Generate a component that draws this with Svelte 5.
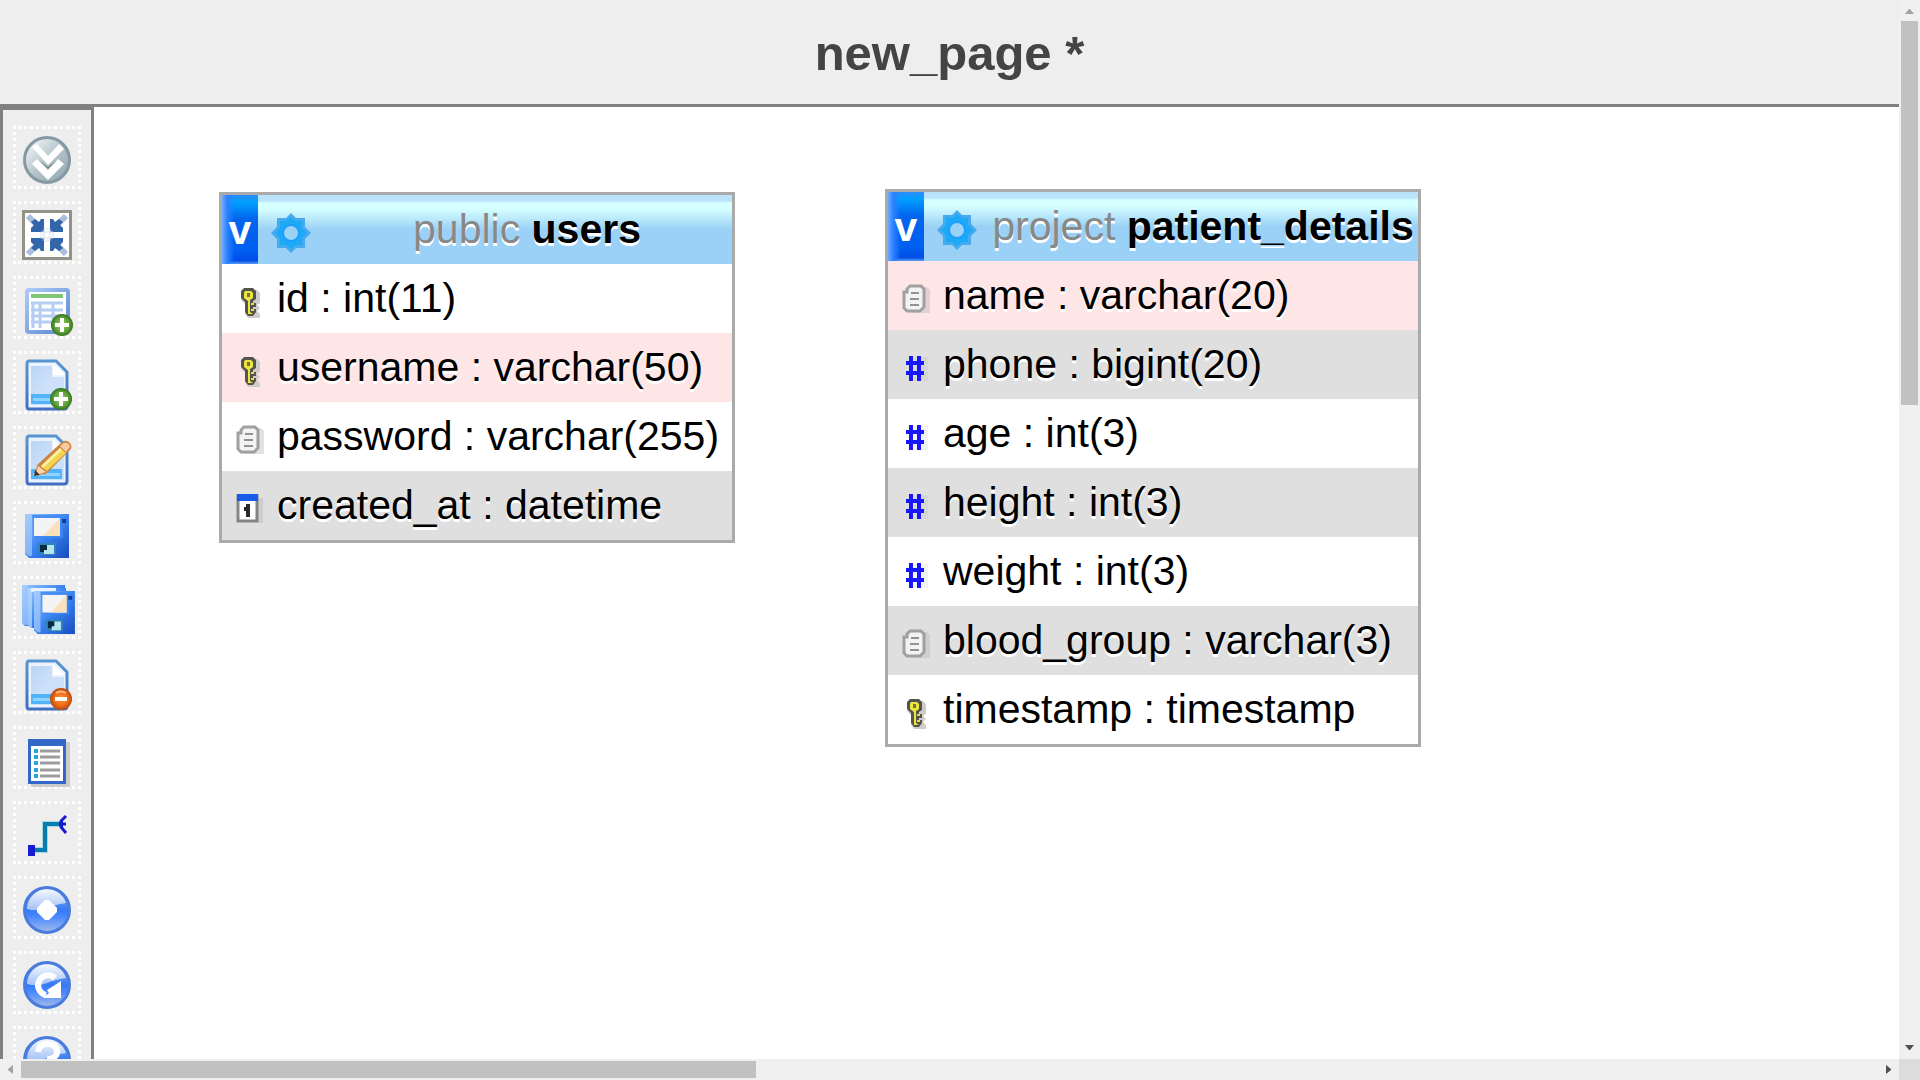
<script>
  const tools = [
    ['toggle', 'Show/Hide tables list'],
    ['fullscreen', 'View in fullscreen'],
    ['tableadd', 'Add tables from other databases'],
    ['pageadd', 'New page'],
    ['pageedit', 'Open page'],
    ['save', 'Save page'],
    ['saveas', 'Save page as'],
    ['pagedelete', 'Delete pages'],
    ['createtable', 'Create table'],
    ['relation', 'Create relationship'],
    ['display', 'Choose column to display'],
    ['reload', 'Reload'],
    ['help', 'Help']
  ];

  const tables = [
    {
      id: 'users', schema: 'public', name: 'users', x: 125, y: 85, width: 516,
      columns: [
        ['key', 'id : int(11)', ''],
        ['key', 'username : varchar(50)', 'pink'],
        ['text', 'password : varchar(255)', ''],
        ['date', 'created_at : datetime', 'grey']
      ]
    },
    {
      id: 'patients', schema: 'project', name: 'patient_details', x: 791, y: 82, width: 536,
      columns: [
        ['text', 'name : varchar(20)', 'pink'],
        ['number', 'phone : bigint(20)', 'grey'],
        ['number', 'age : int(3)', ''],
        ['number', 'height : int(3)', 'grey'],
        ['number', 'weight : int(3)', ''],
        ['text', 'blood_group : varchar(3)', 'grey'],
        ['key', 'timestamp : timestamp', '']
      ]
    }
  ];
</script>

{#snippet floppy()}
  <path d="M0 0H44V44H4L0 40Z" fill="url(#disk)" />
  <path d="M0 0H7V42H4L0 39Z" fill="#a9d0ff" opacity=".65" />
  <path d="M7 1H38V24H9Z" fill="#3d8af2" opacity=".8" />
  <path d="M9 4H35V22H9Z" fill="#f5f4f5" />
  <path d="M35 4V22H18Z" fill="#fbe0bc" />
  <path d="M12 29H31V41H14Z" fill="#2e83b8" />
  <path d="M15 31H22V38H15Z" fill="#082944" />
  <path d="M22 31H29V40H19V36H22Z" fill="#b5e4ec" />
  <rect x="37" y="5" width="4" height="4" fill="#123d96" />
{/snippet}

{#snippet page()}
  <path d="M10 4H37L48 15V49Q48 52 45 52H10Q8 52 8 49V7Q8 4 10 4Z" fill="#eaf3ff" stroke="url(#edge)" stroke-width="3" />
  <path d="M12 9H33V20H45V48H12Z" fill="url(#paper)" />
  <path d="M34 7V18H46Z" fill="#fff" />
  <path d="M12 37H43V47H12Z" fill="#51b4fa" />
  <path d="M14 41H41V44H14Z" fill="#8ed2ff" />
{/snippet}

{#snippet ball()}
  <circle cx="28" cy="28" r="22.5" fill="url(#ball)" stroke="#497bdc" stroke-width="3" />
  <path d="M8 27A20 20 0 0 1 47 21Q35 23 28 26Q19 30 8 27Z" fill="url(#gloss)" />
{/snippet}

{#snippet toolIcon(kind)}
  {#if kind === 'toggle'}
    <circle cx="28" cy="28" r="22.5" fill="url(#grey)" stroke="#8499a4" stroke-width="3" />
    <path d="M13 15L18 12L29 24L40 12L45 17L29 33Z" fill="#fff" />
    <path d="M13 32L18 27L29 38L39 27L45 32L29 48Z" fill="#fff" />
    <path d="M20 28L29 37L38 28L29 35Z" fill="#75868e" />
  {:else if kind === 'fullscreen'}
    <rect x="4.500" y="4.500" width="47" height="47" fill="#fff" stroke="#929289" stroke-width="3" />
    <path d="M9 9L19 19M47 9L37 19M9 47L19 37M47 47L37 37" stroke="#a9bfdc" stroke-width="6" />
    <path d="M25 12V25H12V21L15 18L12 15L16 12L20 15L22 12ZM31 12V25H44V21L41 18L44 15L40 12L36 15L34 12ZM25 44V31H12V35L15 38L12 41L16 44L20 41L22 44ZM31 44V31H44V35L41 38L44 41L40 44L36 41L34 44Z" fill="#3266aa" />
    <path d="M25 22H31V34H25ZM22 25H34V31H22Z" fill="none" stroke="#d5e0ef" stroke-width="1" />
  {:else if kind === 'tableadd'}
    <rect x="8" y="8" width="41" height="42" rx="2" fill="#fff" stroke="url(#edge2)" stroke-width="4" />
    <path d="M12 14H44" stroke="#83c576" stroke-width="4" />
    <path d="M12 21H44M12 28H44M12 34H44M12 40H44M14 20V46M21 20V46M34 20V46" stroke="#b4cdf0" stroke-width="3" />
    <circle cx="43" cy="43" r="11" fill="url(#green)" />
    <path d="M43 36V50M36 43H50" stroke="#fff" stroke-width="4" />
  {:else if kind === 'pageadd'}
    {@render page()}
    <circle cx="42" cy="42" r="11" fill="url(#green)" />
    <path d="M42 35V49M35 42H49" stroke="#fff" stroke-width="4" />
  {:else if kind === 'pageedit'}
    {@render page()}
    <path d="M16 43L18 33L43 10Q47 7 51 11Q54 15 51 18L27 42Z" fill="#c98542" />
    <path d="M22 34L41 16L47 21L28 39Z" fill="#f3d34e" />
    <path d="M23 35L42 17" stroke="#fff0a0" stroke-width="3" />
    <path d="M41 14L45 11Q50 10 51 15L47 20Z" fill="#f7cba1" />
    <path d="M19 34L27 40L17 43Z" fill="#f7d6ac" />
    <path d="M16 38L21 43L15 44Z" fill="#4b3020" />
  {:else if kind === 'save'}
    <g transform="translate(6 7)">{@render floppy()}</g>
  {:else if kind === 'saveas'}
    <g transform="translate(3 3)"><path d="M0 0H43V41H3L0 38Z" fill="url(#disk)" /><path d="M0 0H6V40H3L0 38Z" fill="#a9d0ff" opacity=".7" /></g>
    <g transform="translate(9 6)"><path d="M0 0H38V40H3L0 37Z" fill="url(#disk)" /><path d="M0 0H4V40H3L0 37Z" fill="#b9dbff" opacity=".7" /></g>
    <path d="M12 6H37V10H12Z" fill="#e7f2ff" />
    <g transform="translate(15 9) scale(.93 .98)">{@render floppy()}</g>
  {:else if kind === 'pagedelete'}
    {@render page()}
    <circle cx="42" cy="42" r="11" fill="url(#orange)" />
    <path d="M36 42H48" stroke="#fff" stroke-width="4" />
    <path d="M37 36Q42 33 47 36" fill="none" stroke="#ffbd83" stroke-width="2" />
  {:else if kind === 'createtable'}
    <rect x="12" y="10" width="39" height="45" fill="#bcbcbc" opacity=".7" />
    <rect x="9" y="7" width="38" height="45" fill="#3468c8" />
    <rect x="12" y="14" width="32" height="35" fill="#fff" />
    <path d="M21 19H41M21 25H41M21 31H41M21 38H41M21 44H41" stroke="#9c9c9c" stroke-width="3" />
    <path d="M15 19H19M15 25H19M15 31H19M15 38H19M15 44H19" stroke="#27a6dd" stroke-width="4" />
  {:else if kind === 'relation'}
    <path d="M14 43H26V17H41" fill="none" stroke="#a9d7e3" stroke-width="6" />
    <path d="M14 43H26V17H41" fill="none" stroke="#087cae" stroke-width="4" />
    <rect x="9" y="38" width="7" height="11" fill="#171bd0" />
    <path d="M41 14L44 12V22L41 20Z" fill="#171bd0" />
    <path d="M47 9L42 14V20L47 26M40 17H47" fill="none" stroke="#171bd0" stroke-width="3" />
  {:else if kind === 'display'}
    {@render ball()}
    <path d="M26 18H30L38 26V30L30 38H26L18 30V26Z" fill="#fff" />
  {:else if kind === 'reload'}
    {@render ball()}
    <path d="M36 21A10 10 0 1 0 27 38" fill="none" stroke="#fff" stroke-width="6" />
    <path d="M42 24V41H24L30 36L28 33L36 28Z" fill="#fff" />
  {:else}
    {@render ball()}
    <path d="M19 20Q20 12 28 12Q38 12 38 20Q38 25 31 27V32" fill="none" stroke="#fff" stroke-width="6" />
  {/if}
{/snippet}

{#snippet columnIcon(kind)}
  {#if kind === 'key'}
    <path d="M8 4H21L24 7V17L21 19L24 22L21 25L24 28V32H12L9 28V18L5 14V7Z" fill="#d0cccb" />
    <path d="M8 2H17L20 5V13L17 15V17H20V21H17V23H20V26L17 30H12L9 26V16L5 12V5Z" fill="#55544a" />
    <path d="M9 5H15L17 7V12L14 14V26L17 28H12V15L8 12V7Z" fill="#ece541" />
    <path d="M15 18H18M15 24H18" stroke="#e2db46" stroke-width="2" />
    <rect x="11" y="7" width="3" height="4" fill="#77723a" />
  {:else if kind === 'text'}
    <path d="M10 4H25L28 7V30H9Z" fill="#b9b5b5" opacity=".4" />
    <path d="M8 3H19L22 6V24L18 28H5L2 25V9H5V6Z" fill="#f3f3f3" stroke="#a0a0a0" stroke-width="3" />
    <path d="M9 10H17M8 16H17M8 22H17" stroke="#929292" stroke-width="2" />
  {:else if kind === 'number'}
    <path d="M12 5H26V29H12Z" fill="#aaa" opacity=".15" />
    <path d="M9 4V29M17 4V29M4 11H22M4 21H22" stroke="#1717f8" stroke-width="4" />
  {:else}
    <path d="M22 5H27V30H22Z" fill="#b4b4b4" opacity=".4" />
    <rect x="2" y="3" width="19" height="25" fill="#fff" stroke="#858585" stroke-width="3" />
    <rect x="1" y="1" width="21" height="7" fill="#175ce8" />
    <path d="M12 11V24M8 16H12" stroke="#292929" stroke-width="4" />
  {/if}
{/snippet}

<svg class="defs" aria-hidden="true">
  <defs>
    <linearGradient id="grey" x2="1" y2="1"><stop stop-color="#fff" /><stop offset=".5" stop-color="#b7c5cc" /><stop offset="1" stop-color="#8ea2ad" /></linearGradient>
    <linearGradient id="ball" x2="0" y2="1"><stop stop-color="#9ebcf3" /><stop offset=".5" stop-color="#347af4" /><stop offset=".65" stop-color="#4a88ff" /><stop offset="1" stop-color="#a5bce9" /></linearGradient>
    <linearGradient id="gloss" x2="0" y2="1"><stop stop-color="#f4f8ff" /><stop offset="1" stop-color="#a4c0f4" /></linearGradient>
    <linearGradient id="disk" x2="1" y2="1"><stop stop-color="#9ac8ff" /><stop offset=".5" stop-color="#3a83f1" /><stop offset="1" stop-color="#174bbf" /></linearGradient>
    <linearGradient id="edge" x2="0" y2="1"><stop stop-color="#5796d0" /><stop offset="1" stop-color="#426fc2" /></linearGradient>
    <linearGradient id="edge2" x2="1" y2="1"><stop stop-color="#aac9fa" /><stop offset="1" stop-color="#5a8acd" /></linearGradient>
    <linearGradient id="paper" x2="1" y2="1"><stop stop-color="#b8d5f5" /><stop offset=".5" stop-color="#cfe0f9" /><stop offset="1" stop-color="#c6e1ff" /></linearGradient>
    <radialGradient id="green"><stop stop-color="#98c966" /><stop offset=".65" stop-color="#62a23d" /><stop offset="1" stop-color="#34731d" /></radialGradient>
    <radialGradient id="orange"><stop stop-color="#ff9640" /><stop offset=".65" stop-color="#eb6a12" /><stop offset="1" stop-color="#b84712" /></radialGradient>
  </defs>
</svg>

<div class="window">
  <div class="view">
    <header><h1>new_page *</h1></header>
    <div class="designer">
      <nav aria-label="Designer tools">
        {#each tools as [kind, label]}
          <button class="tool" aria-label={label}>
            <svg viewBox="0 0 56 56" aria-hidden="true">{@render toolIcon(kind)}</svg>
          </button>
        {/each}
      </nav>
      <main>
        {#each tables as t (t.id)}
          <table style:left="{t.x}px" style:top="{t.y}px" style:width="{t.width}px">
            <thead>
              <tr>
                <th class="toggle"><button aria-label="Collapse {t.name}">v</button></th>
                <th class="options">
                  <button aria-label="Options for {t.name}">
                    <svg viewBox="0 0 40 40" aria-hidden="true">
                      <path d="M20 0L25 5H34V14L40 20L34 26V35H25L20 40L15 35H6V26L0 20L6 14V5H15Z" fill="#47aaee" />
                      <path d="M20 4L25 8H31V15L36 20L31 25V32H25L20 36L15 32H9V25L4 20L9 15V8H15Z" fill="#1caaf6" />
                      <circle cx="20" cy="20" r="8" fill="#9ad2f5" stroke="#1e9cff" stroke-width="2" />
                    </svg>
                  </button>
                </th>
                <th class="title"><span>{t.schema}</span> {t.name}</th>
              </tr>
            </thead>
            <tbody>
              {#each t.columns as [kind, label, tone]}
                <tr class={tone}>
                  <td colspan="3">
                    <div class="column">
                      <svg viewBox="0 0 30 33" aria-hidden="true">{@render columnIcon(kind)}</svg>
                      <span>{label}</span>
                    </div>
                  </td>
                </tr>
              {/each}
            </tbody>
          </table>
        {/each}
      </main>
    </div>
  </div>
  <div class="bar vertical">
    <button aria-label="Scroll up"><svg viewBox="0 0 21 21"><path d="M6 14L10 9H11L15 14Z" fill="#a3a3a3" /></svg></button>
    <div class="track"><div class="thumb"></div></div>
    <button aria-label="Scroll down"><svg viewBox="0 0 21 21"><path d="M6 7H15L11 12H10Z" fill="#505050" /></svg></button>
  </div>
  <div class="bar horizontal">
    <button aria-label="Scroll left"><svg viewBox="0 0 21 21"><path d="M13 6V15L8 11V10Z" fill="#a3a3a3" /></svg></button>
    <div class="track"><div class="thumb"></div></div>
    <button aria-label="Scroll right"><svg viewBox="0 0 21 21"><path d="M8 6V15L13 11V10Z" fill="#505050" /></svg></button>
  </div>
  <div class="corner"></div>
</div>

<style>
  :global(body) { overflow: hidden; }
  * { box-sizing: border-box; }
  button { padding: 0; border: 0; background: none; font: inherit; }
  svg { display: block; }
  .defs { position: absolute; width: 0; height: 0; }
  .window {
    display: grid;
    grid-template: minmax(0, 1fr) 21px / minmax(0, 1fr) 21px;
    height: 100vh;
    background: #fff;
    color: #000;
    font-family: "Liberation Sans", Arial, sans-serif;
    font-size: 41px;
  }
  .view { display: flex; flex-direction: column; min-height: 0; overflow: hidden; }
  header { flex: none; padding: 26px 0 24px; border-bottom: 3px solid #808080; background: #eee; }
  h1 { margin: 0; color: #444; font-size: 49px; line-height: 54px; text-align: center; }
  .designer { display: flex; flex: 1; min-height: 0; }
  nav {
    display: flex;
    flex-direction: column;
    flex: none;
    gap: 12px;
    padding: 16px 10px;
    border: 3px solid #808080;
    border-bottom: 0;
    background: #eee;
    overflow: hidden;
  }
  .tool {
    --h: linear-gradient(to right, transparent 50%, #fff 50%);
    --v: linear-gradient(to bottom, #fff 50%, transparent 50%);
    flex: none;
    width: 68px;
    height: 63px;
    padding: 6px 6px 1px;
    background:
      var(--h) right top / 6px 3px repeat-x,
      var(--h) right bottom / 6px 3px repeat-x,
      var(--v) left top / 3px 6px repeat-y,
      var(--v) right top / 3px 6px repeat-y;
  }
  .tool svg { width: 56px; height: 56px; }
  main { position: relative; flex: 1; min-width: 0; overflow: hidden; }
  table { position: absolute; border: 3px solid #aaa; border-spacing: 0; background: #fff; text-shadow: 0 3px 0 #fff; white-space: nowrap; }
  th, td { height: 69px; padding: 0; }
  thead { background: linear-gradient(#b8e3fb 0, #b8e3fb 8%, #d6ffff 12%, #d6ffff 20%, #9bd1f6 50%, #9bd1f6 100%); }
  .toggle { width: 36px; }
  .toggle button {
    display: block;
    width: 36px;
    height: 69px;
    padding-top: 2px;
    background: linear-gradient(to right, #6eaaff 0, #2a80ff 15%, transparent 35%), linear-gradient(#2e8cf8 0, #00a0ff 10%, #0364ee 35%, #0060f0 80%, #004ee8 95%, #5f9cf5 100%);
    color: #fff;
  }
  .options { width: 67px; }
  .options button { display: block; margin: 6px 0 0 13px; }
  .options svg { width: 40px; height: 40px; }
  .title { padding: 0 3px 1px 0; text-align: center; }
  .title span { color: #888; font-weight: 400; }
  .column { display: flex; align-items: center; gap: 11px; padding: 0 0 1px 14px; }
  .column svg { width: 30px; height: 33px; margin-top: 9px; }
  .pink { background: #ffe6e6; }
  .grey { background: #dfdfdf; }
  .bar { display: flex; background: #f0f0f0; }
  .bar button { flex: none; width: 21px; height: 21px; }
  .track { flex: 1; min-width: 0; min-height: 0; }
  .thumb { background: #c1c1c1; }
  .vertical { flex-direction: column; }
  .vertical .track { padding: 0 2px; }
  .vertical .thumb { height: 37.8%; }
  .horizontal .track { padding: 2px 0; }
  .horizontal .thumb { width: 39.6%; height: 100%; }
  .corner { background: #dcdcdc; }
</style>
